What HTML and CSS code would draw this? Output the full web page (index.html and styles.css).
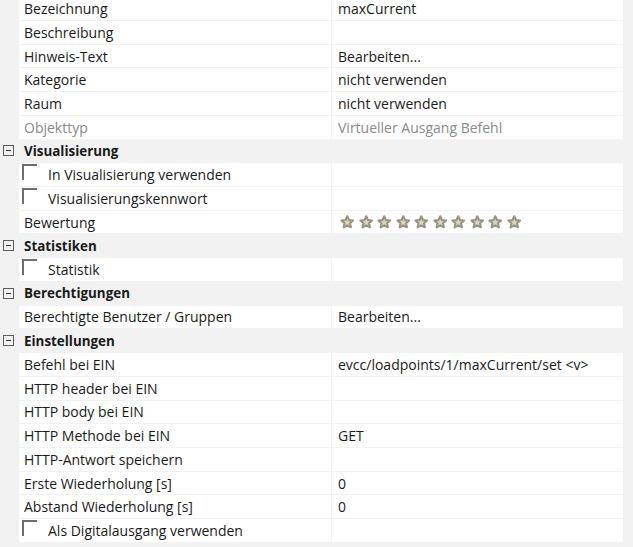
FILE: index.html
```html
<!DOCTYPE html>
<html lang="de">
<head>
<meta charset="utf-8">
<title>Eigenschaften</title>
<link rel="stylesheet" href="styles.css">
</head>
<body>
<div class="grid">
  <div class="row"><div class="k">Bezeichnung</div><div class="v">maxCurrent</div></div>
  <div class="row"><div class="k">Beschreibung</div><div class="v"></div></div>
  <div class="row"><div class="k">Hinweis-Text</div><div class="v">Bearbeiten...</div></div>
  <div class="row"><div class="k">Kategorie</div><div class="v">nicht verwenden</div></div>
  <div class="row"><div class="k">Raum</div><div class="v">nicht verwenden</div></div>
  <div class="row dim"><div class="k">Objekttyp</div><div class="v">Virtueller Ausgang Befehl</div></div>

  <div class="head"><span class="tog"></span><span class="ht">Visualisierung</span></div>
  <div class="row"><div class="k chk"><span class="box"></span>In Visualisierung verwenden</div><div class="v"></div></div>
  <div class="row"><div class="k chk"><span class="box"></span>Visualisierungskennwort</div><div class="v"></div></div>
  <div class="row"><div class="k">Bewertung</div><div class="v stars">
    <svg viewBox="0 0 14 14"><path d="M7 1.2l1.7 3.6 3.9.5-2.9 2.7.8 3.9L7 10l-3.5 1.9.8-3.9L1.4 5.3l3.9-.5z"/></svg>
    <svg viewBox="0 0 14 14"><path d="M7 1.2l1.7 3.6 3.9.5-2.9 2.7.8 3.9L7 10l-3.5 1.9.8-3.9L1.4 5.3l3.9-.5z"/></svg>
    <svg viewBox="0 0 14 14"><path d="M7 1.2l1.7 3.6 3.9.5-2.9 2.7.8 3.9L7 10l-3.5 1.9.8-3.9L1.4 5.3l3.9-.5z"/></svg>
    <svg viewBox="0 0 14 14"><path d="M7 1.2l1.7 3.6 3.9.5-2.9 2.7.8 3.9L7 10l-3.5 1.9.8-3.9L1.4 5.3l3.9-.5z"/></svg>
    <svg viewBox="0 0 14 14"><path d="M7 1.2l1.7 3.6 3.9.5-2.9 2.7.8 3.9L7 10l-3.5 1.9.8-3.9L1.4 5.3l3.9-.5z"/></svg>
    <svg viewBox="0 0 14 14"><path d="M7 1.2l1.7 3.6 3.9.5-2.9 2.7.8 3.9L7 10l-3.5 1.9.8-3.9L1.4 5.3l3.9-.5z"/></svg>
    <svg viewBox="0 0 14 14"><path d="M7 1.2l1.7 3.6 3.9.5-2.9 2.7.8 3.9L7 10l-3.5 1.9.8-3.9L1.4 5.3l3.9-.5z"/></svg>
    <svg viewBox="0 0 14 14"><path d="M7 1.2l1.7 3.6 3.9.5-2.9 2.7.8 3.9L7 10l-3.5 1.9.8-3.9L1.4 5.3l3.9-.5z"/></svg>
    <svg viewBox="0 0 14 14"><path d="M7 1.2l1.7 3.6 3.9.5-2.9 2.7.8 3.9L7 10l-3.5 1.9.8-3.9L1.4 5.3l3.9-.5z"/></svg>
    <svg viewBox="0 0 14 14"><path d="M7 1.2l1.7 3.6 3.9.5-2.9 2.7.8 3.9L7 10l-3.5 1.9.8-3.9L1.4 5.3l3.9-.5z"/></svg>
  </div></div>

  <div class="head"><span class="tog"></span><span class="ht">Statistiken</span></div>
  <div class="row"><div class="k chk"><span class="box"></span>Statistik</div><div class="v"></div></div>

  <div class="head"><span class="tog"></span><span class="ht">Berechtigungen</span></div>
  <div class="row"><div class="k">Berechtigte Benutzer / Gruppen</div><div class="v">Bearbeiten...</div></div>

  <div class="head"><span class="tog"></span><span class="ht">Einstellungen</span></div>
  <div class="row"><div class="k">Befehl bei EIN</div><div class="v">evcc/loadpoints/1/maxCurrent/set &lt;v&gt;</div></div>
  <div class="row"><div class="k">HTTP header bei EIN</div><div class="v"></div></div>
  <div class="row"><div class="k">HTTP body bei EIN</div><div class="v"></div></div>
  <div class="row"><div class="k">HTTP Methode bei EIN</div><div class="v">GET</div></div>
  <div class="row"><div class="k">HTTP-Antwort speichern</div><div class="v"></div></div>
  <div class="row"><div class="k">Erste Wiederholung [s]</div><div class="v">0</div></div>
  <div class="row"><div class="k">Abstand Wiederholung [s]</div><div class="v">0</div></div>
  <div class="row"><div class="k chk"><span class="box"></span>Als Digitalausgang verwenden</div><div class="v"></div></div>
</div>
</body>
</html>
```
FILE: styles.css
```css
html, body {
  margin: 0;
  padding: 0;
  background: #f2f2f2;
  overflow: hidden;
}
body {
  font-family: "Open Sans", "Noto Sans", sans-serif;
  font-size: 14px;
  color: #1a1a1a;
}
.grid {
  display: flex;
  flex-direction: column;
  gap: 1px;
  margin-top: -2.73px;
  width: 623px;
}
.row, .head {
  height: 22.73px;
  display: flex;
  align-items: center;
}
.row {
  margin-left: 19px;
  gap: 1px;
}
.k, .v {
  height: 100%;
  background: #fff;
  display: flex;
  align-items: center;
  white-space: nowrap;
  overflow: hidden;
}
.k {
  width: 312px;
  padding-left: 5px;
  box-sizing: border-box;
}
.v {
  flex: 1;
  padding-left: 6px;
}
.dim .k, .dim .v {
  color: #8a8a8a;
}
.chk {
  padding-left: 3px;
}
.box {
  width: 15px;
  height: 16px;
  flex-shrink: 0;
  box-sizing: border-box;
  border-top: 2px solid #6e6e6e;
  border-left: 2px solid #6e6e6e;
  margin-right: 11px;
  align-self: flex-start;
  margin-top: 1px;
}
.head {
  font-weight: 700;
  font-size: 13.4px;
}
.tog {
  width: 11px;
  height: 11px;
  box-sizing: border-box;
  border: 1px solid #5e5e5e;
  margin-left: 3px;
  margin-right: 10px;
  display: flex;
  align-items: center;
  justify-content: center;
}
.tog::after {
  content: "";
  width: 5px;
  height: 1px;
  background: #333;
}
.stars {
  gap: 4px;
  padding-left: 8px;
}
.stars svg {
  width: 14.5px;
  height: 14.5px;
  fill: #d9d4c6;
  stroke: #9a937f;
  stroke-width: 2;
  stroke-linejoin: round;
}
```
